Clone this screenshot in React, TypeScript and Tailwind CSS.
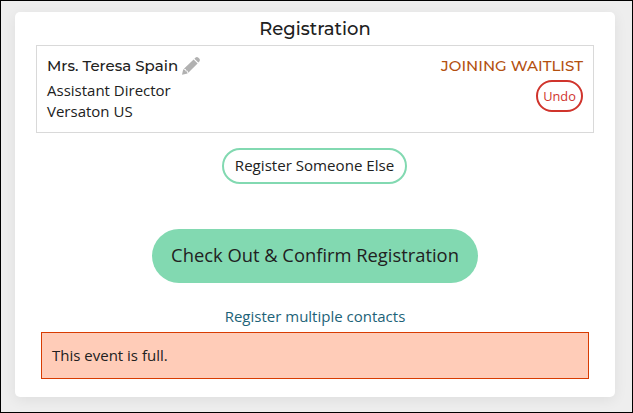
type AttendeeProps = {
  name: string;
  title: string;
  company: string;
  status: string;
};

const PencilIcon = () => (
  <svg viewBox="0 0 18 18" className="size-[18px] fill-[#b1b1b1]">
    <path d="M12.4 1.7 13.6.6Q15-.5 16.4.8L17.2 1.6Q18.5 3 17.4 4.4L16.3 5.6Z" />
    <path d="M11.6 2.4 15.6 6.4 6.3 15.7 5.5 13.7 4.2 13.5 3.9 12.2 1.9 11.7Z" />
    <path d="M1.2 12.3 3.2 12.9 3.6 14.2 4.9 14.5 5.6 16.4 0 17.7Z" />
  </svg>
);

const Attendee: React.FC<AttendeeProps> = ({ name, title, company, status }) => {
  return (
    <div className="flex h-[88px] justify-between border border-[#d9d9d9] px-2.5">
      <div className="pt-[9px]">
        <div className="flex items-center gap-1 font-['Montserrat','Inter',sans-serif] text-[15px] leading-[22px] font-medium">
          <span className="w-[131px] whitespace-nowrap">{name}</span>
          <PencilIcon />
        </div>
        <p className="mt-[3px] text-[15px] leading-[21px]">{title}</p>
        <p className="text-[15px] leading-[21px]">{company}</p>
      </div>
      <div className="flex flex-col items-end pt-[9px]">
        <p className="font-['Montserrat','Inter',sans-serif] text-[15px] leading-[22px] font-medium text-[#b3500f]">
          {status}
        </p>
        <button className="mt-[3px] h-8 w-[47px] rounded-full border-2 border-[#d0342c] pt-px text-[12.8px] text-[#d0342c]">
          Undo
        </button>
      </div>
    </div>
  );
};

export default function App() {
  return (
    <div className="h-[413px] w-[633px] overflow-hidden border border-black bg-[#eeeeee] px-3.5 pt-[11px] font-['Open_Sans',sans-serif] text-[#212121]">
      <div className="flex h-[385px] w-[600px] flex-col rounded-[5px] bg-white px-[21px] shadow-[0_3px_14px_rgba(0,0,0,0.07)]">
        <h1 className="h-[33px] pt-[3px] text-center font-['Montserrat','Inter',sans-serif] text-[18px] leading-7 font-medium">
          Registration
        </h1>
        <Attendee
          name="Mrs. Teresa Spain"
          title="Assistant Director"
          company="Versaton US"
          status="JOINING WAITLIST"
        />
        <div className="flex flex-col items-center">
          <button className="mt-[15px] mr-px h-9 w-[185px] rounded-full border-2 border-[#82d9b1] pb-0.5 text-[15.1px] whitespace-nowrap">
            Register Someone Else
          </button>
          <button className="mt-[45px] h-[54px] w-[326px] rounded-full bg-[#82d9b1] pb-[3px] text-[18.35px]">
            Check Out &amp; Confirm Registration
          </button>
          <a className="mt-[22px] text-[15px] leading-[22px] text-[#1d6378]">Register multiple contacts</a>
        </div>
        <div className="mx-[5px] mt-[5px] flex h-[47px] items-center border border-[#d83b01] bg-[#ffccb8] px-2.5 text-[15px]">
          This event is full.
        </div>
      </div>
    </div>
  );
}
